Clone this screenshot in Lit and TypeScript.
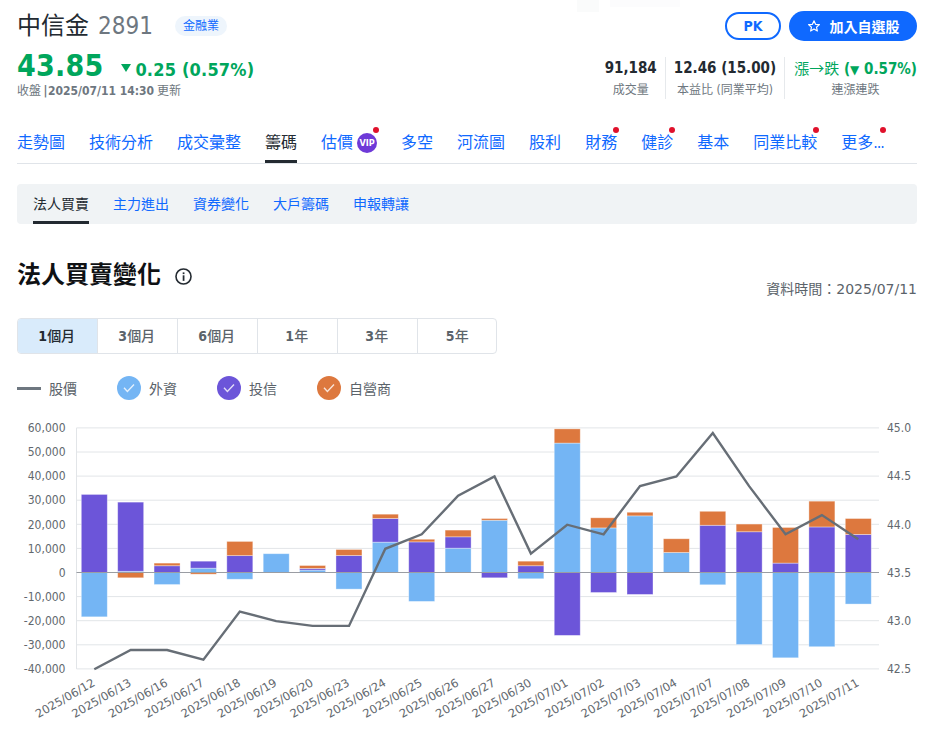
import { LitElement, html, css, svg } from "lit";
import { customElement } from "lit/decorators.js";

const F = "#74b5f4", I = "#6c55d9", D = "#dd783e";
const dates = ["06/12","06/13","06/16","06/17","06/18","06/19","06/20","06/23","06/24","06/25","06/26","06/27","06/30","07/01","07/02","07/03","07/04","07/07","07/08","07/09","07/10","07/11"];
const flows: [number, number, number][] = [
  [-18.4, 32.4, 0],[0.5, 28.7, -2.2],[-5, 2.8, 1.1],[1.8, 2.9, -0.7],[-2.8, 7, 5.9],[7.8, -0.2, 0],[1, 0.7, 1.2],
  [-6.9, 7.05, 2.5],[12.6, 9.8, 1.8],[-12, 12.7, 1.1],[10.1, 4.7, 2.8],[21.7, -2.2, 0.7],[-2.6, 2.8, 1.9],[53.7, -26.1, 5.9],
  [18.5, -8.3, 4.2],[23.5, -9.1, 1.5],[8.3, 0, 5.7],[-5.1, 19.6, 5.8],[-29.9, 16.9, 3.2],[-35.4, 3.9, 14.8],[-30.8, 18.9, 10.7],[-13.1, 15.8, 6.6],
];
const prices = [42.5,42.7,42.7,42.6,43.1,43,42.95,42.95,43.75,43.9,44.3,44.5,43.7,44,43.9,44.4,44.5,44.95,44.4,43.9,44.1,43.85];

const left = 76.5, barW = 26;
const y0 = 155.5; // zero line inside the svg, which starts at page y 417
const yVal = (k: number) => y0 - k * 2.41;
const yPrice = (p: number) => 252.3 - (p - 42.5) * 96.4;
const cx = (i: number) => 94.3 + 36.38 * i;

const nav: { t: string; more?: boolean; dot?: boolean; vip?: boolean; on?: boolean }[] = [
  { t: "走勢圖" }, { t: "技術分析" }, { t: "成交彙整" }, { t: "籌碼", on: true }, { t: "估價", dot: true, vip: true },
  { t: "多空" }, { t: "河流圖" }, { t: "股利" }, { t: "財務", dot: true }, { t: "健診", dot: true }, { t: "基本" },
  { t: "同業比較", dot: true }, { t: "更多", more: true, dot: true },
];
const check = svg`<path d="M7 11.8l3.4 3.6 6.6-6.8" fill="none" stroke="#fff" stroke-opacity=".8" stroke-width="1.4"/>`;

@customElement("app-root")
export class AppRoot extends LitElement {
  static styles = css`
    :host { display: block; padding: 0 17px; font-family: "DejaVu Sans Condensed", "DejaVu Sans", "Noto Sans CJK TC", sans-serif; font-stretch: condensed; color: #232a31; height: 731px; overflow: hidden; box-sizing: border-box; position: relative; }
    .ghost { position: absolute; left: 577px; top: 0; width: 22px; height: 12px; background: #fafbfb; }
    .ghost.b { left: 610px; width: 70px; height: 7px; background: #fcfcfd; }
    .head { display: flex; justify-content: space-between; height: 105px; }
    .l1 { display: flex; align-items: center; height: 22px; margin-top: 15px; }
    .name { font-size: 24px; line-height: 22px; font-weight: 400; }
    .code { font-size: 24px; color: #6e7780; margin-left: 9px; line-height: 22px; }
    .pill { margin: -1px 0 0 22px; height: 20px; padding: 0 8px; line-height: 20px; border-radius: 10px; background: #eef5fc; color: #0f69ff; font-size: 12px; }
    .l2 { display: flex; align-items: baseline; margin-top: 11px; color: #00a65c; font-weight: 700; height: 36px; line-height: 36px; }
    .price { font-size: 30px; letter-spacing: .2px; }
    .chg { font-size: 18px; margin-left: 4px; letter-spacing: .2px; }
    .tri { width: 0; height: 0; border: 5.5px solid transparent; border-top: 8px solid currentColor; border-bottom: 0; margin-left: 18px; align-self: center; margin-top: 3px; }
    .l3 { display: flex; gap: 2px; font-size: 12px; color: #6e7780; margin-top: -1px; line-height: 16px; }
    .l3 b { font-weight: 700; }
    .l3 .bar { margin: 0 -1.5px 0 .5px; }
    .l3 .up { margin-left: 1px; }
    .right { display: flex; flex-direction: column; align-items: flex-end; }
    .btns { display: flex; gap: 8px; align-items: center; margin-top: 11px; height: 30px; }
    .pk { box-sizing: border-box; width: 56px; height: 28px; border: 2px solid #0f69ff; border-radius: 14px; color: #0f69ff; font-weight: 700; font-size: 14px; display: flex; align-items: center; justify-content: center; }
    .add { box-sizing: border-box; width: 128px; height: 30px; border-radius: 15px; background: #0f69ff; color: #fff; font-size: 14px; font-weight: 700; display: flex; align-items: center; justify-content: center; gap: 9px; }
    .add svg { width: 14px; height: 14px; }
    .stats { display: flex; margin-top: 16px; }
    .stat { text-align: center; padding: 0 8px; border-left: 1px solid #e6e9ec; height: 42px; }
    .stat:first-child { border-left: 0; }
    .stat:last-child { padding: 0 0 0 9px; }
    .sv { font-size: 15px; font-weight: 700; line-height: 22px; height: 22px; white-space: nowrap; }
    .sv.g { color: #00a65c; }
    .sv .rg { font-weight: 400; }
    .sv .ar { font-family: "Noto Sans CJK TC", sans-serif; }
    .sv .t { font-family: "DejaVu Sans", sans-serif; font-stretch: normal; font-size: 12px; }
    .sl { font-size: 12px; color: #6e7780; line-height: 22px; }
    .nav { display: flex; gap: 24px; height: 58px; border-bottom: 1px solid #e0e4e9; margin-bottom: 20px; }
    .ni { position: relative; height: 58px; box-sizing: border-box; padding-top: 27px; font-size: 16px; line-height: 22px; color: #0f69ff; display: flex; white-space: nowrap; }
    .ni.on { color: #232a31; }
    .ni.on::after { content: ""; position: absolute; left: 0; right: 0; bottom: 0; height: 3px; background: #232a31; }
    .dots { letter-spacing: -1px; }
    .vip { width: 20px; height: 20px; margin-left: 4px; margin-top: 1px; border-radius: 50%; background: #6e3ad8; color: #fff; font-size: 9px; font-weight: 700; text-align: center; line-height: 20px; }
    .dot { position: absolute; right: -2px; top: 22px; width: 6px; height: 6px; border-radius: 50%; background: #e0112b; }
    .sub { height: 40px; background: #f0f3f5; border-radius: 4px; display: flex; gap: 24px; padding: 0 16px; }
    .si { position: relative; font-size: 14px; line-height: 40px; color: #0f69ff; }
    .si.on { color: #232a31; }
    .si.on::after { content: ""; position: absolute; left: 0; right: 0; bottom: 0; height: 3px; background: #232a31; }
    .title { display: flex; align-items: flex-start; justify-content: space-between; margin-top: 35px; height: 59px; }
    .tl { display: flex; align-items: center; height: 32px; }
    .tl h2 { margin: 0; font-size: 24px; font-weight: 700; line-height: 32px; color: #0f1114; }
    .tl svg { width: 19px; height: 19px; margin-left: 13px; margin-top: 2px; }
    .time { font-family: "DejaVu Sans", "Noto Sans CJK TC", sans-serif; font-stretch: normal; font-size: 14px; color: #5b636a; margin-top: 21px; line-height: 18px; }
    .range { display: flex; box-sizing: border-box; width: 480px; height: 36px; border: 1px solid #e0e4e9; border-radius: 4px; overflow: hidden; }
    .r { flex: none; box-sizing: border-box; width: 80px; padding-right: 1.5px; text-align: center; font-size: 14px; line-height: 34px; color: #5b636a; font-weight: 700; border-right: 1px solid #e0e4e9; }
    .r:first-child { background: #d9ebfb; color: #232a31; }
    .r:last-child { border-right: 0; }
    .r span { font-weight: 500; }
    .legend { display: flex; align-items: center; margin-top: 22px; height: 24px; font-size: 14px; color: #5b636a; }
    .lg { display: flex; align-items: center; gap: 8px; width: 100px; }
    .ln { width: 24px; height: 3px; background: #6e7780; }
    .cc { width: 24px; height: 24px; }
    .chart { display: block; margin: 17px 0 0 -17px; width: 934px; height: 314px; }
    .chart text { font-size: 12px; fill: #62686e; }
    .chart text.d { font-family: "DejaVu Sans", sans-serif; font-stretch: normal; font-size: 11.5px; }
  `;

  private bars() {
    return flows.map((f, i) => {
      let pos = 0, neg = 0;
      const cols = [F, I, D];
      return f.map((v, s) => {
        if (!v) return null;
        const a = v > 0 ? pos : neg;
        const b = a + v;
        if (v > 0) pos = b; else neg = b;
        const top = Math.min(yVal(a), yVal(b));
        return svg`<rect x=${cx(i) - barW / 2} y=${top} width=${barW} height=${Math.abs(v) * 2.41} fill=${cols[s]} stroke="#fff" stroke-opacity=".45" stroke-width=".8"/>`;
      });
    });
  }

  private chart() {
    const grid = [60, 50, 40, 30, 20, 10, 0, -10, -20, -30, -40];
    const right = ["45.0", "44.5", "44.0", "43.5", "43.0", "42.5"];
    const pts = prices.map((p, i) => `${cx(i).toFixed(1)},${yPrice(p).toFixed(1)}`).join(" ");
    return svg`<svg class="chart" viewBox="0 0 934 314">
      ${grid.filter((g) => g !== 0).map((g) => svg`<line x1=${left} x2="879" y1=${yVal(g)} y2=${yVal(g)} stroke="#e2e5e8"/>`)}
      <line x1=${left} x2=${left} y1=${yVal(60)} y2=${yVal(-40)} stroke="#e2e5e8"/>
      ${this.bars()}
      <line x1=${left} x2="879" y1=${y0} y2=${y0} stroke="#9a9da3"/>
      <polyline points=${pts} fill="none" stroke="#676e76" stroke-width="2.4"/>
      ${grid.map((g) => svg`<text x="65.5" y=${yVal(g) + 4.2} text-anchor="end">${g === 0 ? "0" : (g * 1000).toLocaleString("en-US")}</text>`)}
      ${right.map((t, i) => svg`<text x="887" y=${yVal(60 - i * 20) + 4.2}>${t}</text>`)}
      ${dates.map((d, i) => svg`<text class="d" text-anchor="end" transform="translate(${cx(i) + 1.5} ${268}) rotate(-30)">2025/${d}</text>`)}
    </svg>`;
  }

  render() {
    return html`
      <div class="ghost"></div><div class="ghost b"></div>
      <div class="head">
        <div>
          <div class="l1"><span class="name">中信金</span><span class="code">2891</span><span class="pill">金融業</span></div>
          <div class="l2"><span class="price">43.85</span><span class="tri"></span><span class="chg">0.25 (0.57%)</span></div>
          <div class="l3"><span>收盤</span><b class="bar">|</b><b>2025/07/11 14:30</b><span class="up">更新</span></div>
        </div>
        <div class="right">
          <div class="btns">
            <div class="pk">PK</div>
            <div class="add"><svg viewBox="0 0 24 24"><path d="M12 3l2.7 6.1 6.6.6-5 4.4 1.5 6.5L12 17.2l-5.8 3.4 1.5-6.5-5-4.4 6.6-.6z" fill="none" stroke="currentColor" stroke-width="2" stroke-linejoin="round"/></svg><span>加入自選股</span></div>
          </div>
          <div class="stats">
            <div class="stat"><div class="sv">91,184</div><div class="sl">成交量</div></div>
            <div class="stat"><div class="sv">12.46 (15.00)</div><div class="sl">本益比 (同業平均)</div></div>
            <div class="stat"><div class="sv g"><span class="rg">漲<span class="ar">→</span>跌</span> (<span class="t">▼</span> 0.57%)</div><div class="sl">連漲連跌</div></div>
          </div>
        </div>
      </div>
      <div class="nav">
        ${nav.map((n) => html`<div class="ni ${n.on ? "on" : ""}">${n.t}${n.more ? html`<span class="dots">...</span>` : ""}${n.vip ? html`<span class="vip">VIP</span>` : ""}${n.dot ? html`<span class="dot"></span>` : ""}</div>`)}
      </div>
      <div class="sub">
        ${["法人買賣", "主力進出", "資券變化", "大戶籌碼", "申報轉讓"].map((t, i) => html`<div class="si ${i === 0 ? "on" : ""}">${t}</div>`)}
      </div>
      <div class="title">
        <div class="tl"><h2>法人買賣變化</h2>
          <svg viewBox="0 0 24 24"><circle cx="12" cy="12" r="9.5" fill="none" stroke="#232a31" stroke-width="2"/><rect x="11" y="10.5" width="2.2" height="7" fill="#232a31"/><rect x="11" y="6.8" width="2.2" height="2.2" fill="#232a31"/></svg>
        </div>
        <div class="time">資料時間：2025/07/11</div>
      </div>
      <div class="range">
        ${[["1", "個月"], ["3", "個月"], ["6", "個月"], ["1", "年"], ["3", "年"], ["5", "年"]].map(([a, b]) => html`<div class="r">${a}<span>${b}</span></div>`)}
      </div>
      <div class="legend">
        <div class="lg"><div class="ln"></div>股價</div>
        ${[[F, "外資"], [I, "投信"], [D, "自營商"]].map(([c, t]) => html`<div class="lg"><svg class="cc" viewBox="0 0 24 24"><circle cx="12" cy="12" r="12" fill=${c}/>${check}</svg>${t}</div>`)}
      </div>
      ${this.chart()}
    `;
  }
}
